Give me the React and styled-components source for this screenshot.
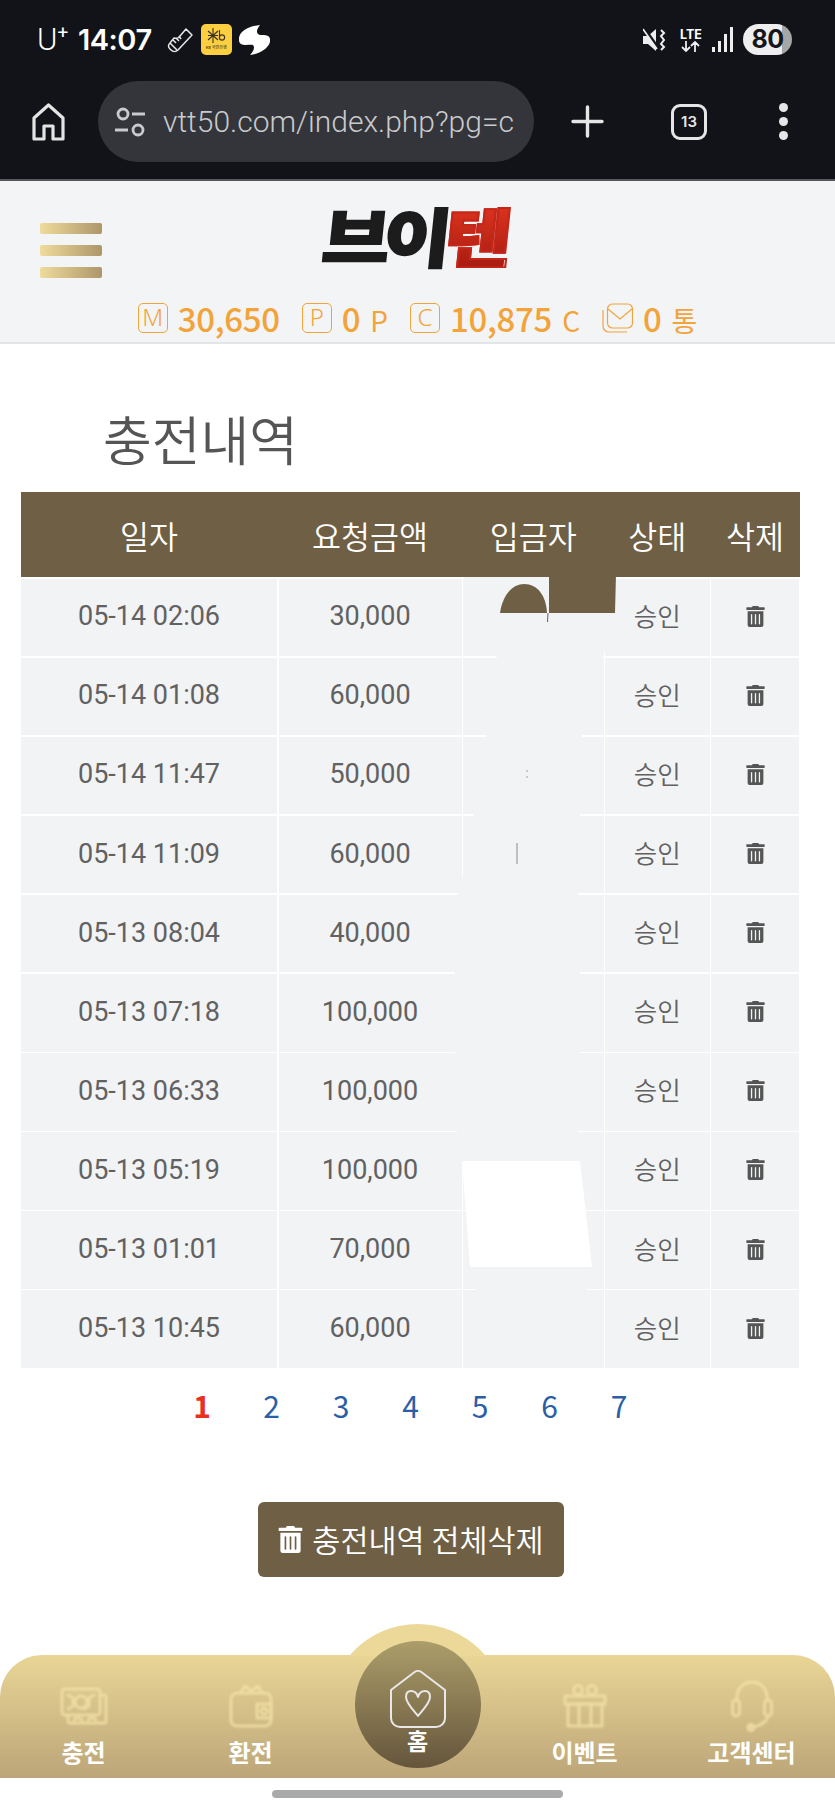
import { Fragment } from 'react';
import styled, { createGlobalStyle } from 'styled-components';
import { FaTrashAlt } from 'react-icons/fa';

const GlobalStyle = createGlobalStyle`
    html, body {
        margin: 0;
        padding: 0;
        background: #fff;
    }
    body {
        font-family: "Noto Sans CJK KR", "Noto Sans", sans-serif;
    }
`
const Page = styled.div`
    width: 835px;
    height: 1809px;
    overflow: hidden;
    display: flex;
    flex-direction: column;
    background: #fff;
`
const StatusBar = styled.div`
    height: 75px;
    box-sizing: border-box;
    padding: 4px 43px 0 37px;
    background: #111318;
    display: flex;
    align-items: center;
    justify-content: space-between;
    color: #fff;
`
const StatusGroup = styled.div`
    display: flex;
    align-items: center;
`
const Carrier = styled.span`
    font-family: Roboto, sans-serif;
    font-weight: 300;
    font-size: 31px;
    line-height: 36px;
    width: 41px;
    sup {
        font-size: 19px;
        line-height: 0;
        vertical-align: 11px;
        font-weight: 400;
    }
`
const Clock = styled.span`
    font-family: Inter, sans-serif;
    font-weight: 600;
    font-size: 29px;
    letter-spacing: -0.5px;
    margin-right: 15px;
`
const KbBadge = styled.div`
    width: 31px;
    height: 31px;
    margin: 0 7px 0 7px;
    border-radius: 5px;
    background: #fbcf3f;
    display: flex;
    flex-direction: column;
    align-items: center;
    color: #3a3320;
    svg {
        margin-top: 3px;
    }
    span {
        font-size: 4px;
        line-height: 5px;
        white-space: nowrap;
        font-weight: 500;
    }
`
const LteBox = styled.div`
    width: 24px;
    margin: 0 9px 0 12px;
    display: flex;
    flex-direction: column;
    align-items: center;
    font-family: Inter, sans-serif;
    font-weight: 700;
    font-size: 12.5px;
    line-height: 13px;
`
const BatteryPill = styled.div`
    width: 49px;
    height: 31px;
    margin-left: 10px;
    border-radius: 16px;
    background: linear-gradient(90deg, #eee 0 80%, #a6a6a6 80% 100%);
    color: #15161a;
    font-family: Inter, sans-serif;
    font-weight: 700;
    font-size: 25px;
    letter-spacing: -0.5px;
    line-height: 31px;
    text-align: center;
`
const BrowserBar = styled.div`
    height: 106px;
    box-sizing: border-box;
    border-bottom: 2px solid #55575c;
    background: #111318;
    padding: 0 0 11px 32px;
    display: flex;
    align-items: center;
`
const UrlPill = styled.div`
    width: 436px;
    height: 81px;
    box-sizing: border-box;
    margin-left: 33px;
    padding: 0 16px 0 17px;
    border-radius: 41px;
    background: #33353a;
    display: flex;
    align-items: center;
    gap: 18px;
    color: #c9cacd;
`
const UrlText = styled.span`
    font-family: Roboto, sans-serif;
    font-weight: 300;
    font-size: 30px;
    white-space: nowrap;
    overflow: hidden;
`
const PlusIcon = styled.svg`
    margin-left: 37px;
`
const TabCount = styled.div`
    width: 36px;
    height: 36px;
    box-sizing: border-box;
    margin-left: 67px;
    border: 3.5px solid #e6e6e6;
    border-radius: 9px;
    color: #e6e6e6;
    font-family: Inter, sans-serif;
    font-weight: 600;
    font-size: 15px;
    line-height: 29px;
    text-align: center;
`
const Dots = styled.div`
    margin-left: 72px;
    display: flex;
    flex-direction: column;
    gap: 5px;
    i {
        display: block;
        width: 9px;
        height: 9px;
        border-radius: 50%;
        background: #e6e6e6;
    }
`
const Header = styled.header`
    height: 163px;
    box-sizing: border-box;
    border-bottom: 2px solid #e4e5e7;
    background: #f3f4f6;
    display: flex;
    flex-direction: column;
`
const HeaderTop = styled.div`
    height: 116px;
    box-sizing: border-box;
    padding: 0 40px;
    display: grid;
    grid-template-columns: 1fr auto 1fr;
    align-items: center;
`
const Burger = styled.div`
    display: flex;
    flex-direction: column;
    gap: 11px;
    margin-top: 22px;
    i {
        display: block;
        width: 62px;
        height: 11px;
        border-radius: 2px;
        background: linear-gradient(90deg, #efdc9b, #ad966a);
    }
`
const Logo = styled.div`
    font-weight: 900;
    font-size: 68px;
    line-height: 70px;
    letter-spacing: -6px;
    margin: 0 6px 8px 0;
    color: #1c1c1c;
    -webkit-text-stroke: 2px #1c1c1c;
    transform: skewX(-6deg) scale(1.08, 0.94);
    white-space: nowrap;
    span {
        background: linear-gradient(180deg, #ea3a22, #9d170e);
        -webkit-background-clip: text;
        background-clip: text;
        color: transparent;
        -webkit-text-stroke: 2px #c4261a;
    }
`
const BalanceRow = styled.div`
    display: flex;
    justify-content: center;
    align-items: center;
    gap: 22px;
    color: #f2a33a;
    margin-top: -1px;
`
const Balance = styled.div`
    display: flex;
    align-items: center;
    gap: 10px;
`
const LetterBox = styled.span`
    width: 30px;
    height: 30px;
    box-sizing: border-box;
    border: 1px solid #f2a33a;
    border-radius: 5px;
    font-family: "Noto Sans", sans-serif;
    font-weight: 300;
    font-size: 24px;
    line-height: 26px;
    text-align: center;
`
const Amount = styled.span`
    font-weight: 500;
    font-size: 33px;
    letter-spacing: -0.3px;
    line-height: 40px;
`
const Unit = styled.span`
    font-weight: 400;
    font-size: 28px;
    line-height: 40px;
    margin-top: 4px;
`
const Content = styled.main`
    padding: 64px 35px 0 21px;
    display: flex;
    flex-direction: column;
`
const Title = styled.h1`
    margin: 0 0 24px 82px;
    font-weight: 350;
    font-size: 53px;
    line-height: 60px;
    color: #555;
`
const TableWrap = styled.div`
    position: relative;
    width: 779px;
`
const HeadRow = styled.div`
    height: 85px;
    margin-bottom: 1.5px;
    background: #6f5f45;
    display: grid;
    grid-template-columns: 256px 183px 140.5px 104.5px 88px;
    column-gap: 1.5px;
    align-items: center;
    justify-items: center;
    color: #fff;
    font-weight: 350;
    font-size: 31.5px;
    line-height: 40px;
`
const BodyGrid = styled.div`
    display: grid;
    grid-template-columns: 256px 183px 140.5px 104.5px 88px;
    grid-auto-rows: 77.6px;
    gap: 1.5px;
`
const Cell = styled.div`
    background: #f2f3f5;
    color: #616161;
    font-family: Roboto, "Noto Sans CJK KR", sans-serif;
    font-size: 27px;
    display: flex;
    align-items: center;
    justify-content: center;
    padding-bottom: 2px;
    box-sizing: border-box;
`
const StatusCell = styled(Cell)`
    font-family: "Noto Sans CJK KR", sans-serif;
    font-weight: 350;
    font-size: 25.5px;
    padding-bottom: 6px;
`
const MaskLayer = styled.svg`
    position: absolute;
    top: 0;
    left: 0;
`
const Pager = styled.div`
    margin-top: 17px;
    display: flex;
    justify-content: center;
`
const PageNum = styled.span`
    width: 69.5px;
    text-align: center;
    font-size: 30px;
    line-height: 40px;
    font-weight: ${(props) => (props.$active ? 700 : 400)};
    color: ${(props) => (props.$active ? '#e8321e' : '#2a5fa8')};
`
const ClearButton = styled.button`
    align-self: center;
    width: 306px;
    height: 75px;
    margin-top: 77px;
    border: 0;
    padding: 0;
    border-radius: 6px;
    background: #6f5f45;
    color: #fff;
    font-family: "Noto Sans CJK KR", sans-serif;
    font-weight: 350;
    font-size: 30.5px;
    display: flex;
    align-items: center;
    justify-content: center;
    gap: 8px;
`
const BottomNav = styled.nav`
    position: relative;
    height: 123px;
    margin-top: 78px;
    border-radius: 42px 42px 0 0;
    background: linear-gradient(180deg, #e9d696, #bca578);
    display: grid;
    grid-template-columns: repeat(5, 1fr);
`
const Hump = styled.div`
    position: absolute;
    left: calc(50% - 89px);
    top: -31px;
    width: 178px;
    height: 32px;
    background: #ecd99a;
    clip-path: circle(89px at 50% 89px);
`
const HomeCircle = styled.div`
    position: absolute;
    left: calc(50% - 63px);
    top: -14px;
    width: 126px;
    height: 127px;
    border-radius: 50%;
    background: linear-gradient(180deg, #ac9e6a, #65553c);
    display: flex;
    flex-direction: column;
    align-items: center;
    padding-top: 29px;
    box-sizing: border-box;
    color: #fff;
    font-weight: 700;
    font-size: 23px;
    line-height: 22px;
`
const HomeLabel = styled.span`
    margin-top: 1px;
`
const NavItem = styled.div`
    display: flex;
    flex-direction: column;
    align-items: center;
    color: #fff;
    font-weight: 700;
    font-size: 24px;
    line-height: 28px;
`
const NavIcon = styled.div`
    height: 52px;
    margin-top: 25px;
    margin-bottom: 6px;
    display: flex;
    align-items: center;
    justify-content: center;
    opacity: 0.75;
    svg {
        filter: blur(1px);
        stroke: #f3e3a8;
        fill: none;
        stroke-width: 3;
        stroke-linejoin: round;
        stroke-linecap: round;
    }
`
const HomeIndicator = styled.div`
    width: 291px;
    height: 8px;
    margin: 12px auto 0;
    border-radius: 4px;
    background: #aaa;
`

const rows = [
    ['05-14 02:06', '30,000'],
    ['05-14 01:08', '60,000'],
    ['05-14 11:47', '50,000'],
    ['05-14 11:09', '60,000'],
    ['05-13 08:04', '40,000'],
    ['05-13 07:18', '100,000'],
    ['05-13 06:33', '100,000'],
    ['05-13 05:19', '100,000'],
    ['05-13 01:01', '70,000'],
    ['05-13 10:45', '60,000'],
];

const Mail = () => (
    <svg width="31" height="30" viewBox="0 0 31 30" fill="none" stroke="#f2a33a" strokeWidth="1.2">
        <rect x="5.5" y="1" width="25" height="24" rx="5" />
        <path d="M6 6l12 10L30 6" />
        <path d="M1 7v16a6 6 0 0 0 6 6h18" />
    </svg>
);

// smudges that hide the depositor names, drawn in page coordinates
const NameMask = () => (
    <MaskLayer width="779" height="876" viewBox="21 492 779 876">
        <path fill="#f2f3f5" d="M464 577H606V651H603V660L582 733V738L580 812V818L578 891V897L580 970V976L580 1049V1055L578 1128V1134L580 1161H460L458 1134L456 1128V1055L455 1049V976L455 970V897L460 891L473 818L474 812L486 738L487 733L496 660L497 654H464Z" />
        <path fill="#f2f3f5" d="M476 1286H587V1293H476Z" />
        <path fill="#fff" d="M462 1161H580L592 1267H470Z" />
        <path fill="#6f5f45" d="M500 613C503 593 514 584 524 584C538 584 546 596 547 613Z" />
        <path fill="#6f5f45" d="M549 574H616L615 613H549Z" />
        <path stroke="#5c6066" strokeWidth="1" fill="none" d="M548 613L547.5 622" />
        <path stroke="#a9adb2" strokeWidth="1.2" fill="none" strokeDasharray="2 4" d="M527 770V778" />
        <path stroke="#9a9ea4" strokeWidth="1.2" fill="none" d="M517 843V864" />
    </MaskLayer>
);

export default function App() {
    return (
        <>
            <GlobalStyle />
            <Page>
                <StatusBar>
                    <StatusGroup>
                        <Carrier>U<sup>+</sup></Carrier>
                        <Clock>14:07</Clock>
                        <svg width="27" height="26" viewBox="0 0 27 26" fill="none" stroke="#e8e8e8" strokeWidth="1.5" strokeLinejoin="round">
                            <path d="M19 2l6 6L11 23c-2 2-5 2-7 0l-1-1c-2-2-2-4 0-6l4-5c3 1 5 0 6-2z" />
                            <path d="M3 16l7 7M6 13l3 3M9 11l3 3M12 9l2 3" />
                        </svg>
                        <KbBadge>
                            <svg width="19" height="18" viewBox="0 0 19 18" fill="none" stroke="#3a3320" strokeWidth="1.1">
                                <path d="M6 1v15M1 4l10 9M11 4L1 13M1 8.5h10" />
                                <path d="M12.5 3v9" />
                                <circle cx="15" cy="10.5" r="2.6" />
                            </svg>
                            <span>KB 국민은행</span>
                        </KbBadge>
                        <svg width="31" height="30" viewBox="0 0 31 30" fill="#fff">
                            <path d="M21 0C13 1 7 3 3 7C-1 11 -1 17 2 19C6 21 11 19 14 20C16 22 15 26 11 30C18 29 25 26 28 22C32 18 32 13 29 11C26 9 21 11 19 9C17 7 18 4 21 0Z" />
                        </svg>
                    </StatusGroup>
                    <StatusGroup>
                        <svg width="24" height="24" viewBox="0 0 24 24">
                            <path fill="#eee" d="M0 8h5l8-7v22l-8-7H0z" />
                            <path d="M1 0l15 21" stroke="#111318" strokeWidth="3" />
                            <path d="M0 1l14 20" stroke="#eee" strokeWidth="1.6" />
                            <path d="M18 2l3 3-3 3 3 4-3 4 3 3-3 3" fill="none" stroke="#eee" strokeWidth="2" />
                        </svg>
                        <LteBox>
                            LTE
                            <svg width="22" height="11" viewBox="0 0 22 11" fill="none" stroke="#eee" strokeWidth="1.8">
                                <path d="M6 0v10M2 6l4 4 4-4M15 11V1M11 5l4-4 4 4" />
                            </svg>
                        </LteBox>
                        <svg width="21" height="25" viewBox="0 0 21 25" fill="#eee">
                            <rect x="0" y="20" width="3" height="5" />
                            <rect x="6" y="14" width="3" height="11" />
                            <rect x="12" y="7" width="3" height="18" />
                            <rect x="18" y="0" width="3" height="25" />
                        </svg>
                        <BatteryPill>80</BatteryPill>
                    </StatusGroup>
                </StatusBar>
                <BrowserBar>
                    <svg width="33" height="38" viewBox="0 0 33 38" fill="none" stroke="#e4e4e4" strokeWidth="3.2" strokeLinejoin="round">
                        <path d="M2 36V15L16.5 2L31 15V36H21V23H12V36Z" />
                    </svg>
                    <UrlPill>
                        <svg width="30" height="30" viewBox="0 0 30 30" fill="none" stroke="#c9cacd" strokeWidth="2.8">
                            <circle cx="8" cy="7" r="5" />
                            <path d="M17 7H30M0 23H13" />
                            <circle cx="23" cy="23" r="5" />
                        </svg>
                        <UrlText>vtt50.com/index.php?pg=c</UrlText>
                    </UrlPill>
                    <PlusIcon width="33" height="33" viewBox="0 0 33 33" stroke="#e6e6e6" strokeWidth="3.4" strokeLinecap="round">
                        <path d="M16.5 2V31M2 16.5H31" />
                    </PlusIcon>
                    <TabCount>13</TabCount>
                    <Dots><i /><i /><i /></Dots>
                </BrowserBar>
                <Header>
                    <HeaderTop>
                        <Burger><i /><i /><i /></Burger>
                        <Logo>브이<span>텐</span></Logo>
                    </HeaderTop>
                    <BalanceRow>
                        <Balance>
                            <LetterBox>M</LetterBox>
                            <Amount>30,650</Amount>
                        </Balance>
                        <Balance>
                            <LetterBox>P</LetterBox>
                            <Amount>0</Amount>
                            <Unit>P</Unit>
                        </Balance>
                        <Balance>
                            <LetterBox>C</LetterBox>
                            <Amount>10,875</Amount>
                            <Unit>C</Unit>
                        </Balance>
                        <Balance>
                            <Mail />
                            <Amount>0</Amount>
                            <Unit>통</Unit>
                        </Balance>
                    </BalanceRow>
                </Header>
                <Content>
                    <Title>충전내역</Title>
                    <TableWrap>
                        <HeadRow>
                            <span>일자</span>
                            <span>요청금액</span>
                            <span>입금자</span>
                            <span>상태</span>
                            <span>삭제</span>
                        </HeadRow>
                        <BodyGrid>
                            {rows.map(([date, amount]) => (
                                <Fragment key={date}>
                                    <Cell>{date}</Cell>
                                    <Cell>{amount}</Cell>
                                    <Cell />
                                    <StatusCell>승인</StatusCell>
                                    <Cell><FaTrashAlt size={21} color="#555" /></Cell>
                                </Fragment>
                            ))}
                        </BodyGrid>
                        <NameMask />
                    </TableWrap>
                    <Pager>
                        {[1, 2, 3, 4, 5, 6, 7].map((n) => (
                            <PageNum key={n} $active={n === 1}>{n}</PageNum>
                        ))}
                    </Pager>
                    <ClearButton>
                        <FaTrashAlt size={27} />
                        충전내역 전체삭제
                    </ClearButton>
                </Content>
                <BottomNav>
                    <Hump />
                    <NavItem>
                        <NavIcon>
                            <svg width="48" height="38" viewBox="0 0 48 38">
                                <rect x="2" y="2" width="38" height="26" rx="3" />
                                <path d="M40 8h4a2 2 0 0 1 2 2v24a2 2 0 0 1-2 2H10a2 2 0 0 1-2-2v-6" />
                                <circle cx="21" cy="15" r="6" />
                                <path d="M8 8l5 3v8l-5 3M34 8l-5 3v8l-5 3M14 33l4-3 4 3M28 33l4-3 4 3" />
                            </svg>
                        </NavIcon>
                        충전
                    </NavItem>
                    <NavItem>
                        <NavIcon>
                            <svg width="44" height="44" viewBox="0 0 44 44">
                                <rect x="2" y="9" width="40" height="33" rx="6" />
                                <path d="M11 9L16 2L22 7L29 2L33 9" />
                                <rect x="28" y="20" width="14" height="14" />
                                <circle cx="35" cy="27" r="3" />
                            </svg>
                        </NavIcon>
                        환전
                    </NavItem>
                    <HomeCircle>
                        <svg width="58" height="58" viewBox="0 0 58 58" fill="none" stroke="#e8e8e8" strokeWidth="2" strokeLinejoin="round">
                            <path d="M2 20L25 2.5a6 6 0 0 1 8 0L56 20V48a9 9 0 0 1-9 9H11a9 9 0 0 1-9-9Z" />
                            <path d="M29 46C25 41 17 33 17 27C17 23 19 21 22 21C25 21 28 23 29 27C30 23 33 21 36 21C39 21 41 23 41 27C41 33 33 41 29 46Z" />
                        </svg>
                        <HomeLabel>홈</HomeLabel>
                    </HomeCircle>
                    <span />
                    <NavItem>
                        <NavIcon>
                            <svg width="44" height="44" viewBox="0 0 44 44">
                                <rect x="2" y="12" width="40" height="8" />
                                <rect x="5" y="20" width="34" height="22" />
                                <path d="M16 20V42M28 20V42" />
                                <circle cx="15" cy="6" r="4.5" />
                                <circle cx="29" cy="6" r="4.5" />
                            </svg>
                        </NavIcon>
                        이벤트
                    </NavItem>
                    <NavItem>
                        <NavIcon>
                            <svg width="42" height="52" viewBox="0 0 42 52">
                                <path d="M6 20V18C6 8 12 2 21 2C30 2 36 8 36 18V20" />
                                <rect x="1.5" y="20" width="7" height="16" rx="3.5" />
                                <rect x="33.5" y="20" width="7" height="16" rx="3.5" />
                                <path d="M37 36C36 42 30 45 23 47" />
                                <circle cx="20" cy="47.5" r="3" fill="#f0df9f" />
                            </svg>
                        </NavIcon>
                        고객센터
                    </NavItem>
                </BottomNav>
                <HomeIndicator />
            </Page>
        </>
    );
}
